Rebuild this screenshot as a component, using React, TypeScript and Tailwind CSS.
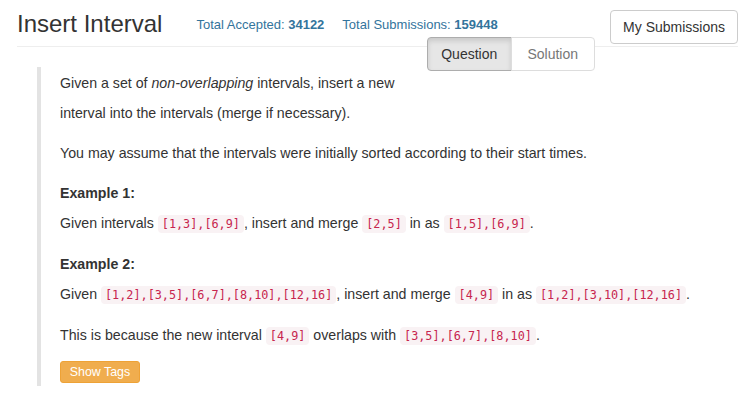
import React from 'react';

const Code: React.FC<{ children: React.ReactNode }> = ({ children }) => (
  <code className="rounded-[4px] bg-[#f9f2f4] px-[4px] py-[2px] font-['DejaVu_Sans_Mono',monospace] text-[11.8px] text-[#c7254e]">
    {children}
  </code>
);

const App: React.FC = () => {
  return (
    <div className="min-h-screen bg-white font-['Liberation_Sans',Arial,sans-serif] text-[#333]">
      <div className="px-[17px]">
        {/* header */}
        <div className="flex h-[47px] items-start border-b border-[#eee]">
          <h1 className="mt-[11px] text-[24px] leading-[26px] font-normal">Insert Interval</h1>
          <div className="mt-[16px] ml-[34px] flex gap-[18px] text-[13px] leading-[18px] text-[#33749c]">
            <span>
              Total Accepted: <b>34122</b>
            </span>
            <span>
              Total Submissions: <b>159448</b>
            </span>
          </div>
          <button className="mt-[10px] ml-auto flex h-[34px] items-center rounded-[4px] border border-[#ccc] bg-white px-[12px] text-[14px] leading-[20px] text-[#333]">
            My Submissions
          </button>
        </div>

        {/* tabs */}
        <div className="-mt-[10px] ml-[410px] flex h-[34px] w-[168px] text-[14px] leading-[20px]">
          <button className="flex flex-1 items-center justify-center rounded-l-[4px] border border-[#adadad] bg-[#e6e6e6] text-[#333] shadow-[inset_0_3px_5px_rgba(0,0,0,0.125)]">
            Question
          </button>
          <button className="-ml-px flex flex-1 items-center justify-center rounded-r-[4px] border border-[#ddd] bg-white text-[#777]">
            Solution
          </button>
        </div>

        {/* question body */}
        <div className="-mt-[4px] ml-[20px] border-l-[4px] border-[#e3e3e3] pt-[1px] pb-[3px] pl-[19px] text-[14.2px]">
          <p className="mb-[10px] leading-[30px]">
            Given a set of <i>non-overlapping</i> intervals, insert a new
            <br />
            interval into the intervals (merge if necessary).
          </p>
          <p className="mb-[10px] leading-[30px]">
            You may assume that the intervals were initially sorted according to their start times.
          </p>
          <p className="mb-[10px] leading-[30px]">
            <b>Example 1:</b>
            <br />
            Given intervals <Code>[1,3],[6,9]</Code>, insert and merge <Code>[2,5]</Code> in as{' '}
            <Code>[1,5],[6,9]</Code>.
          </p>
          <p className="mb-[10px] leading-[30px]">
            <b>Example 2:</b>
            <br />
            Given <Code>[1,2],[3,5],[6,7],[8,10],[12,16]</Code>, insert and merge <Code>[4,9]</Code> in as{' '}
            <Code>[1,2],[3,10],[12,16]</Code>.
          </p>
          <p className="mb-[10px] leading-[30px]">
            This is because the new interval <Code>[4,9]</Code> overlaps with <Code>[3,5],[6,7],[8,10]</Code>.
          </p>
          <button className="mt-[7px] flex h-[22px] w-[80px] items-center justify-center rounded-[3px] border border-[#eea236] bg-[#f0ad4e] text-[12.4px] leading-[18px] text-white">
            Show Tags
          </button>
        </div>
      </div>
    </div>
  );
};

export default App;
